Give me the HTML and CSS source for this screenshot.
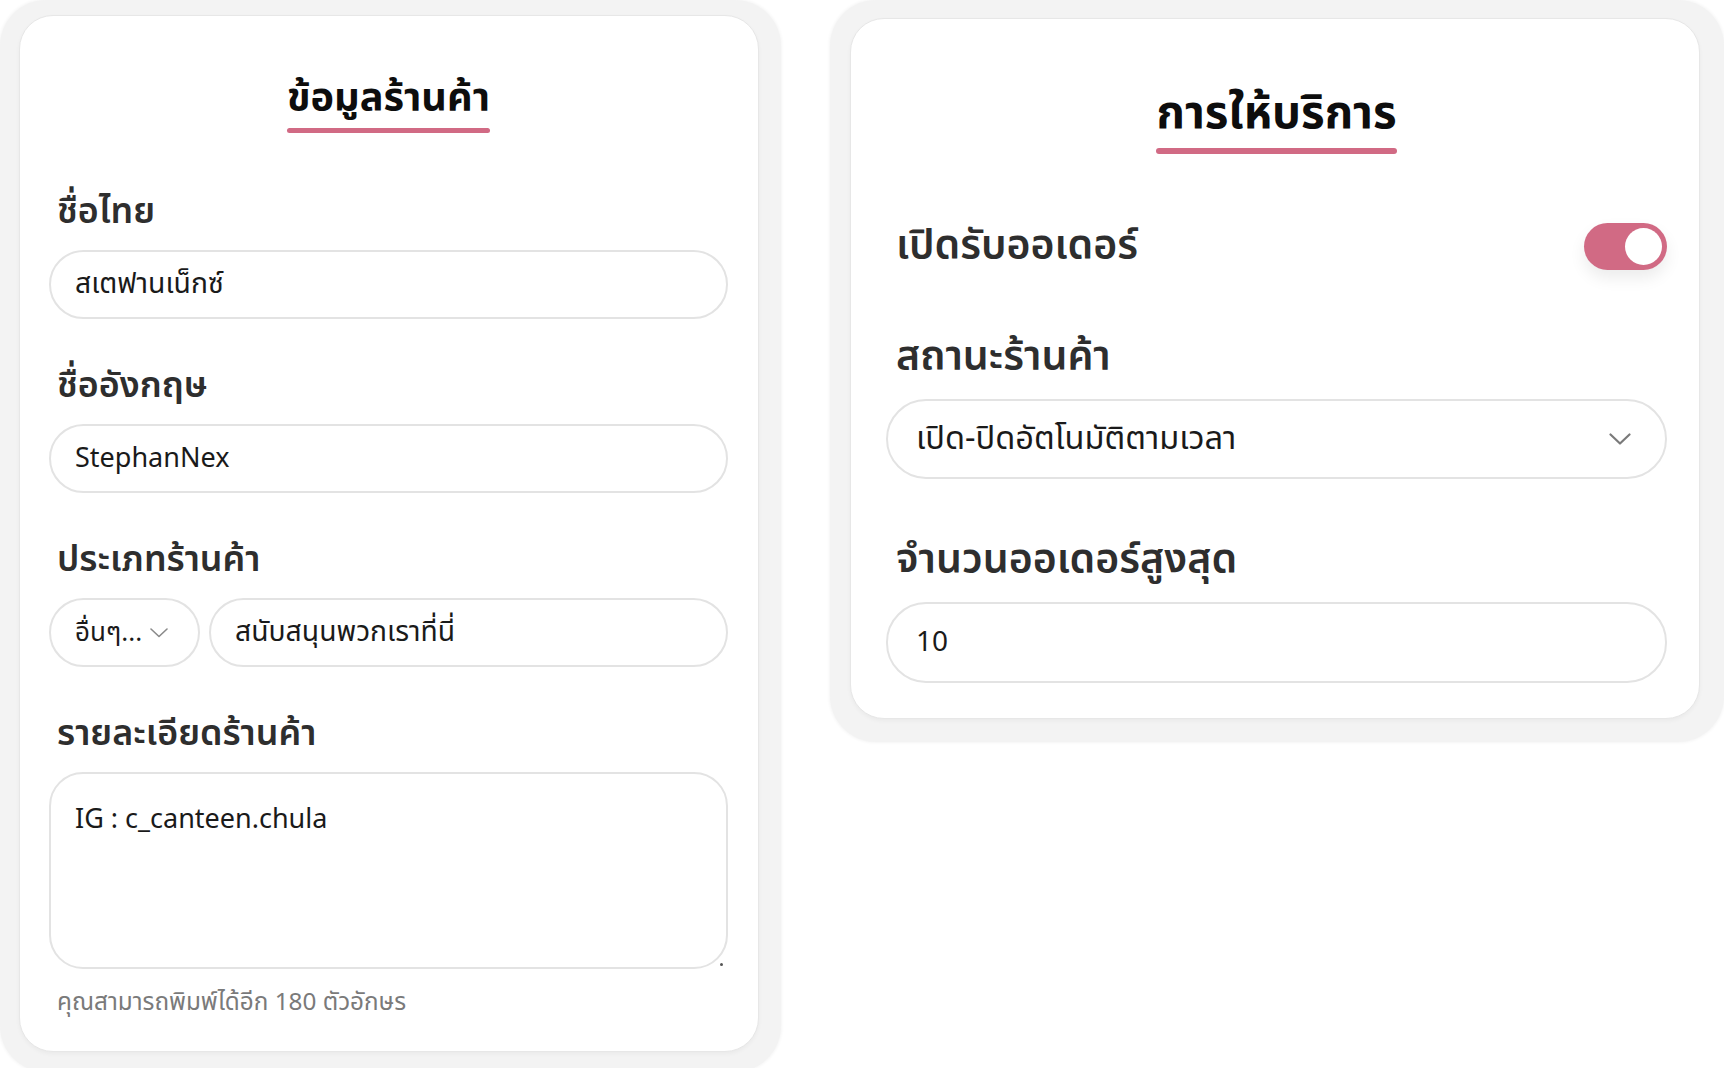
FILE: index.html
```html
<!DOCTYPE html>
<html lang="th">
<head>
<meta charset="utf-8">
<title>ข้อมูลร้านค้า</title>
<link rel="stylesheet" href="styles.css">
</head>
<body>
<div class="page">
  <section class="shell shell-left">
    <div class="card card-left">
      <div class="title-wrap"><h2 class="title">ข้อมูลร้านค้า</h2></div>
      <div class="field">
        <div class="label">ชื่อไทย</div>
        <div class="input">สเตฟานเน็กซ์</div>
      </div>
      <div class="field">
        <div class="label">ชื่ออังกฤษ</div>
        <div class="input latin">StephanNex</div>
      </div>
      <div class="field">
        <div class="label">ประเภทร้านค้า</div>
        <div class="row">
          <div class="input select-sm">อื่นๆ...<svg class="chev-sm" width="18" height="10" viewBox="0 0 18 10"><polyline points="1,1 9,8.5 17,1" fill="none" stroke="#8a8a8a" stroke-width="1.6" stroke-linecap="round" stroke-linejoin="round"/></svg></div>
          <div class="input grow">สนับสนุนพวกเราที่นี่</div>
        </div>
      </div>
      <div class="field">
        <div class="label">รายละเอียดร้านค้า</div>
        <div class="input textarea latin">IG : c_canteen.chula</div>
        <div class="helper">คุณสามารถพิมพ์ได้อีก 180 ตัวอักษร</div>
      </div>
    </div>
  </section>
  <section class="shell shell-right">
    <div class="card card-right">
      <div class="title-wrap"><h2 class="title title-lg">การให้บริการ</h2></div>
      <div class="toggle-row">
        <div class="label label-lg">เปิดรับออเดอร์</div>
        <div class="toggle"><span class="knob"></span></div>
      </div>
      <div class="field-lg">
        <div class="label label-lg">สถานะร้านค้า</div>
        <div class="input input-lg select-lg">เปิด-ปิดอัตโนมัติตามเวลา<svg class="chev-lg" width="22" height="12" viewBox="0 0 22 12"><polyline points="1.5,1.5 11,10.5 20.5,1.5" fill="none" stroke="#7a7a7a" stroke-width="2.2" stroke-linecap="round" stroke-linejoin="round"/></svg></div>
      </div>
      <div class="field-lg">
        <div class="label label-lg">จำนวนออเดอร์สูงสุด</div>
        <div class="input input-lg number">10</div>
      </div>
    </div>
  </section>
</div>
</body>
</html>
```
FILE: styles.css
```css
* { box-sizing: border-box; }
body {
  margin: 0;
  background: #ffffff;
  font-family: "Noto Sans Thai", "Noto Sans", sans-serif;
  color: #1c1c1c;
}
.page {
  display: flex;
  align-items: flex-start;
  gap: 49px;
}
.shell {
  background: #f3f3f3;
  border-radius: 46px;
  box-shadow: 0 0 3px 1px #f5f5f5;
}
.shell-left {
  width: 781px;
  padding: 15px 22px 20px 19px;
}
.shell-right {
  width: 894px;
  padding: 18px 24px 23px 20px;
}
.card {
  background: #ffffff;
  border: 1px solid #e7e7e7;
  border-radius: 34px;
  box-shadow: 0 2px 4px rgba(0, 0, 0, 0.04);
}
.card-left {
  padding: 58px 30px 33px 29px;
}
.card-right {
  padding: 69px 32px 35px 35px;
}
.title-wrap {
  display: flex;
  justify-content: center;
}
.title {
  margin: 0;
  font-size: 39.7px;
  line-height: 48px;
  font-weight: 700;
  color: #0d0d0d;
}
.title::after {
  content: "";
  display: block;
  height: 5px;
  margin-top: 6px;
  border-radius: 3px;
  background: #d16a84;
}
.title-lg {
  font-size: 45.6px;
  line-height: 54px;
}
.title-lg::after {
  height: 6px;
  margin-top: 6px;
}
.field {
  margin-top: 47px;
}
.title-wrap + .field {
  margin-top: 59px;
}
.label {
  font-size: 35.8px;
  line-height: 40px;
  font-weight: 600;
  color: #2e2e2e;
  padding-left: 8px;
  margin-bottom: 18px;
}
.input {
  height: 69px;
  border: 2px solid #e3e3e3;
  border-radius: 35px;
  padding: 0 24px;
  display: flex;
  align-items: center;
  font-size: 28.3px;
  color: #1a1a1a;
  background: #fff;
  white-space: nowrap;
}
.latin {
  font-size: 27px;
}
.row {
  display: flex;
  gap: 9px;
}
.select-sm {
  width: 151px;
  flex: none;
  gap: 8px;
  font-size: 26px;
}
.grow {
  flex: 1;
}
.textarea {
  position: relative;
  height: 197px;
  align-items: flex-start;
  padding-top: 31px;
  line-height: 30px;
  border-radius: 34px;
}
.textarea::after {
  content: "";
  position: absolute;
  right: 3px;
  bottom: 1px;
  width: 3px;
  height: 3px;
  border-radius: 50%;
  background: #555;
}
.helper {
  margin-top: 19px;
  padding-left: 8px;
  font-size: 24.3px;
  line-height: 30px;
  color: #7a7a7a;
}
.toggle-row {
  margin-top: 68px;
  height: 48px;
  display: flex;
  align-items: center;
  justify-content: space-between;
}
.label-lg {
  font-size: 41px;
  line-height: 44px;
  padding-left: 10px;
  margin-bottom: 20px;
}
.toggle-row .label-lg {
  margin-bottom: 0;
}
.toggle {
  position: relative;
  width: 83px;
  height: 47px;
  border-radius: 24px;
  background: #d16a84;
  box-shadow: 0 8px 16px rgba(0, 0, 0, 0.08);
}
.knob {
  position: absolute;
  right: 5px;
  top: 5px;
  width: 37px;
  height: 37px;
  border-radius: 50%;
  background: #ffffff;
}
.field-lg {
  margin-top: 65px;
}
.field-lg + .field-lg {
  margin-top: 59px;
}
.input-lg {
  height: 80px;
  border-radius: 40px;
  padding: 0 34px 0 28px;
  font-size: 32.6px;
}
.select-lg {
  justify-content: space-between;
}
.number {
  height: 81px;
  font-size: 28px;
}
```
